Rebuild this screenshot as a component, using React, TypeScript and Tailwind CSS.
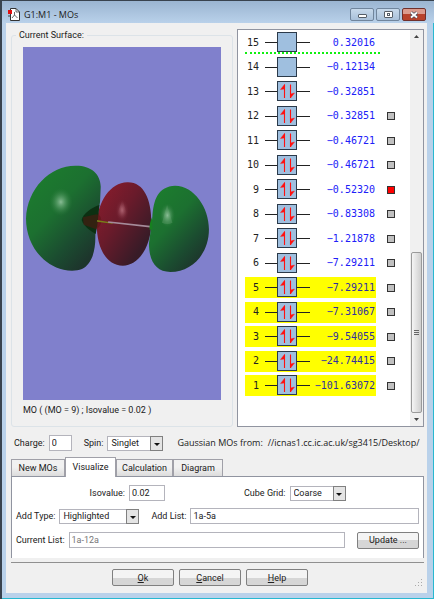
import React from "react";

type Orbital = { n: number; e: string; filled: boolean; box?: "grey" | "red"; hl?: boolean };

const orbitals: Orbital[] = [
  { n: 15, e: "0.32016", filled: false },
  { n: 14, e: "−0.12134", filled: false },
  { n: 13, e: "−0.32851", filled: true },
  { n: 12, e: "−0.32851", filled: true, box: "grey" },
  { n: 11, e: "−0.46721", filled: true, box: "grey" },
  { n: 10, e: "−0.46721", filled: true, box: "grey" },
  { n: 9, e: "−0.52320", filled: true, box: "red" },
  { n: 8, e: "−0.83308", filled: true, box: "grey" },
  { n: 7, e: "−1.21878", filled: true, box: "grey" },
  { n: 6, e: "−7.29211", filled: true, box: "grey" },
  { n: 5, e: "−7.29211", filled: true, box: "grey", hl: true },
  { n: 4, e: "−7.31067", filled: true, box: "grey", hl: true },
  { n: 3, e: "−9.54055", filled: true, box: "grey", hl: true },
  { n: 2, e: "−24.74415", filled: true, box: "grey", hl: true },
  { n: 1, e: "−101.63072", filled: true, box: "grey", hl: true },
];

function OrbitalRow({ o }: { o: Orbital }) {
  return (
    <li className="flex h-[21px] items-center">
      <div className={`flex h-full w-[131px] items-center ${o.hl ? "bg-[#ffff00]" : ""}`}>
        <span className="w-[14px] text-right text-[#222]">{o.n}</span>
        <svg className="ml-[6px] h-[21px] w-[45px] shrink-0" viewBox="0 0 45 21" aria-hidden="true">
          <path d="M0 10.5H45" stroke="#222" strokeWidth="1" />
          <rect x="12.5" y="0.5" width="19" height="19" fill="#9fbfdf" stroke="#2b3a4a" />
          {o.filled && (
            <g fill="#ff1010" stroke="#ff1010">
              <path d="M19.5 3.5V17" strokeWidth="1.1" />
              <path d="M19.5 3.5L15.5 8.5L19.5 8Z" strokeWidth="0.4" />
              <path d="M25.5 3.5V17" strokeWidth="1.1" />
              <path d="M25.5 17L29.5 12L25.5 13Z" strokeWidth="0.4" />
            </g>
          )}
        </svg>
        <span className={`flex w-[65px] justify-end ${o.hl ? "text-[#3030a0]" : "text-[#2020f8]"}`}>{o.e}</span>
      </div>
      {o.box && (
        <input
          type="checkbox"
          aria-label={`Surface for orbital ${o.n}`}
          defaultChecked={o.box === "red"}
          className="ml-[11px] size-2 appearance-none border border-[#333] bg-[#c0c0c0] checked:bg-[#ff0000]"
        />
      )}
    </li>
  );
}

function Surface() {
  return (
    <svg className="block h-[353px] w-full bg-[#8080cc]" viewBox="0 0 197 353" preserveAspectRatio="none" role="img" aria-label="Molecular orbital surface">
      <defs>
        <linearGradient id="green" x1="0.1" y1="0.1" x2="0.75" y2="0.95">
          <stop offset="0" stopColor="#1c7c2e" />
          <stop offset="0.4" stopColor="#1c7030" />
          <stop offset="0.75" stopColor="#1b4c30" />
          <stop offset="1" stopColor="#1d352c" />
        </linearGradient>
        <linearGradient id="red" x1="0.1" y1="0.1" x2="0.8" y2="0.8">
          <stop offset="0" stopColor="#861c2c" />
          <stop offset="0.45" stopColor="#6a1b2b" />
          <stop offset="1" stopColor="#381b27" />
        </linearGradient>
        <radialGradient id="shine">
          <stop offset="0" stopColor="#8fc09a" stopOpacity="0.95" />
          <stop offset="0.4" stopColor="#66a674" stopOpacity="0.6" />
          <stop offset="1" stopColor="#2c7a3c" stopOpacity="0" />
        </radialGradient>
        <radialGradient id="redShine">
          <stop offset="0" stopColor="#b56a78" stopOpacity="0.7" />
          <stop offset="1" stopColor="#7a2838" stopOpacity="0" />
        </radialGradient>
      </defs>
      <g transform="translate(-8 103) scale(0.33333)">
        <path d="M180 47C225 46 255 70 256 110L254 155C248 195 240 220 240 262C240 310 226 345 200 357C185 363 165 364 145 359C80 345 33 280 33 206C36 115 105 47 180 47Z" fill="url(#green)" />
        <ellipse cx="137" cy="156" rx="35" ry="42" fill="url(#shine)" />
        <path d="M335 97C385 95 407 150 407 215C407 285 372 347 322 347C270 346 244 290 244 222C247 155 285 98 335 97Z" fill="url(#red)" />
        <path d="M321 148L337 202Q320 211 302 201Z" fill="url(#redShine)" />
        <ellipse cx="320" cy="182" rx="20" ry="34" fill="url(#redShine)" />
        <path d="M478 107C535 108 579 172 579 238C579 310 530 366 464 366C420 365 400 333 400 280L410 205C413 145 428 110 478 107Z" fill="url(#green)" />
        <path d="M454 165L470 218Q455 226 439 218Z" fill="#68a574" opacity="0.4" />
        <ellipse cx="455" cy="196" rx="23" ry="36" fill="url(#shine)" />
        <path d="M252 165C230 172 203 190 199 210C206 230 226 243 241 252L246 225Z" fill="#0c3012" />
        <path d="M203 202L243 193Q257 193 258 214Q255 232 242 238L205 224Z" fill="#5a1410" opacity="0.5" />
        <path d="M245 210L292 218L291 221L245 215Z" fill="#788018" />
        <path d="M278 216L403 230" stroke="#a58b9a" strokeWidth="5" />
        <path d="M410 200Q400 220 402 240L410 238Z" fill="#178020" />
      </g>
    </svg>
  );
}

function Field({ id, label, value, className, disabled }: { id: string; label: string; value: string; className: string; disabled?: boolean }) {
  return (
    <>
      <label htmlFor={id} className="shrink-0 whitespace-nowrap">{label}</label>
      <input
        id={id}
        defaultValue={value}
        disabled={disabled}
        className={`ml-1 h-4 min-w-0 border border-[#b4b4bc] bg-white px-[2px] disabled:text-[#777] ${className}`}
      />
    </>
  );
}

function Picker({ id, label, value, className }: { id: string; label: string; value: string; className: string }) {
  return (
    <>
      <label htmlFor={id} className="shrink-0 whitespace-nowrap">{label}</label>
      <div className={`relative ml-1 h-[15px] shrink-0 ${className}`}>
        <select id={id} defaultValue={value} className="block h-full w-full appearance-none border border-[#b4b4bc] bg-white pl-[3px] leading-[11px]">
          <option>{value}</option>
        </select>
        <span className="pointer-events-none absolute inset-y-0 right-0 flex w-[13px] items-center justify-center border border-[#808080] bg-[#e4e4e4]">
          <svg className="mt-[2px] h-[3px] w-[6px]" viewBox="0 0 6 3" aria-hidden="true"><path d="M0 0H6L3 3Z" fill="#111" /></svg>
        </span>
      </div>
    </>
  );
}

const buttonClass = "h-[17px] w-[62px] rounded-[2px] border border-[#808080] bg-linear-to-b from-[#f4f4f4] from-50% to-[#d6d6d6] to-50% leading-[14px]";
const tabClass = "h-[17px] border border-b-0 border-[#a0a0a8] bg-linear-to-b from-[#f1f1f1] from-45% to-[#dcdcdc] text-center";

export default function App() {
  return (
    <main className="flex min-h-screen flex-col border-t border-l-2 border-[#39434e] bg-[#b9d1ea] pr-[7px] pb-[6px] pl-1 font-['Roboto','Liberation_Sans',sans-serif] text-[9px] leading-[12px] text-[#202020] shadow-[inset_-1px_-1px_0_#28b8d0]">
      <header className="-mr-[7px] -ml-1 flex h-[22px] items-start bg-linear-to-b from-[#9bb5d1] to-[#b9d1ea] pr-2 pl-[5px]">
        <svg className="mt-[7px] size-[13px]" viewBox="0 0 13 13" aria-hidden="true">
          <path d="M3.5.5H9L12.5 4V12.5H3.5Z" fill="#fff" stroke="#333" />
          <path d="M9 .5V4H12.5M7.5 4V7L5 10M7.5 7L10.5 10" fill="none" stroke="#444" strokeWidth="0.8" />
          <rect x="1" y="2" width="4" height="4" fill="#e01010" />
          <path d="M1 8H3" stroke="#444" />
        </svg>
        <h1 className="mt-[7px] ml-1 flex-1 font-['Open_Sans',sans-serif] leading-[14px]">G1:M1 - MOs</h1>
        <div className="mt-[7px] flex gap-[2px]">
          <button aria-label="Minimize" className="flex h-[13px] w-6 items-center justify-center rounded-[2px] border border-[#70859c] bg-linear-to-b from-[#c7d9eb] to-[#a9c1da]">
            <span className="mt-[3px] h-1 w-[9px] rounded-[1px] border border-[#555e68] bg-white" />
          </button>
          <button aria-label="Maximize" className="flex h-[13px] w-6 items-center justify-center rounded-[2px] border border-[#70859c] bg-linear-to-b from-[#c7d9eb] to-[#a9c1da]">
            <span className="flex h-[7px] w-[9px] items-center justify-center rounded-[1px] border border-[#555e68] bg-white"><span className="h-[3px] w-[3px] border border-[#555e68]" /></span>
          </button>
          <button aria-label="Close" className="flex h-[13px] w-6 items-center justify-center rounded-[2px] border border-[#70302c] bg-linear-to-b from-[#dc9b8e] from-45% to-[#b8422c] to-50%">
            <svg className="h-[8px] w-[10px]" viewBox="0 0 10 8" aria-hidden="true">
              <path d="M2 1.5L8 6.5M8 1.5L2 6.5" stroke="#444b5a" strokeWidth="3.2" />
              <path d="M2 1.5L8 6.5M8 1.5L2 6.5" stroke="#fff" strokeWidth="1.8" />
            </svg>
          </button>
        </div>
      </header>

      <div className="flex flex-1 flex-col bg-[#f0f0f0] pt-[6px] pr-[3px] pl-[5px]">
        <div className="flex gap-1">
          <fieldset className="min-w-0 flex-1 rounded-[3px] border border-[#dce3e8] px-[11px] pb-[10px]">
            <legend className="-ml-[7px] px-[3px]">Current Surface:</legend>
            <div className="pt-[6px]">
              <Surface />
              <p className="mt-[4px]">MO ( (MO = 9) ; Isovalue = 0.02 )</p>
            </div>
          </fieldset>

          <section aria-label="Orbitals" className="flex w-[187px] shrink-0 border border-[#9094a0] bg-white">
            <ul className="relative mt-[2px] ml-[7px] flex h-[364px] flex-1 flex-col justify-between font-['DejaVu_Sans_Mono','Liberation_Mono',monospace] text-[10px]">
              {orbitals.map((o) => <OrbitalRow key={o.n} o={o} />)}
              <li aria-hidden="true" className="absolute top-[20px] left-0 w-[135px] border-t-2 border-dotted border-[#10f010]" />
            </ul>
            <div className="flex w-[13px] flex-col items-center bg-[#f0f0f0]" aria-hidden="true">
              <svg className="mt-[5px] h-[3px] w-[5px]" viewBox="0 0 5 3"><path d="M0 3H5L2.5 0Z" fill="#444" /></svg>
              <div className="mt-auto flex h-[161px] w-[11px] flex-col items-center justify-center gap-px rounded-[2px] border border-[#9a9a9a] bg-linear-to-r from-[#f5f5f5] to-[#cfcfcf]">
                <span className="h-px w-[5px] bg-[#666]" />
                <span className="h-px w-[5px] bg-[#666]" />
                <span className="h-px w-[5px] bg-[#666]" />
              </div>
              <svg className="my-[5px] h-[3px] w-[5px]" viewBox="0 0 5 3"><path d="M0 0H5L2.5 3Z" fill="#444" /></svg>
            </div>
          </section>
        </div>

        <div className="mt-2 flex h-4 items-center pl-[3px]">
          <Field id="charge" label="Charge:" value="0" className="w-[23px]" />
          <div className="ml-3 flex items-center"><Picker id="spin" label="Spin:" value="Singlet" className="w-14" /></div>
          <p className="ml-[14px] min-w-0 flex-1 overflow-hidden font-['Open_Sans',sans-serif] whitespace-nowrap">
            <span>Gaussian MOs from:</span><span className="ml-[5px]">//icnas1.cc.ic.ac.uk/sg3415/Desktop/</span>
          </p>
        </div>

        <div role="tablist" className="mt-[6px] flex h-[19px] items-end">
          <button role="tab" aria-selected="false" className={`w-[54px] ${tabClass}`}>New MOs</button>
          <button role="tab" aria-selected="true" className="relative -mb-px h-5 w-[51px] border border-b-0 border-[#a0a0a8] bg-white pb-[2px]">Visualize</button>
          <button role="tab" aria-selected="false" className={`w-[57px] ${tabClass}`}>Calculation</button>
          <button role="tab" aria-selected="false" className={`w-[50px] ${tabClass}`}>Diagram</button>
        </div>
        <div role="tabpanel" className="flex flex-col gap-[7px] border-x border-t border-[#9094a0] bg-white px-1 pt-[8px] pb-[9px]">
          <div className="flex h-4 items-center">
            <div className="flex w-[149px] items-center justify-end"><Field id="isovalue" label="Isovalue:" value="0.02" className="w-9" /></div>
            <div className="ml-[79px] flex items-center"><Picker id="grid" label="Cube Grid:" value="Coarse" className="w-14" /></div>
          </div>
          <div className="flex h-4 items-center">
            <Picker id="type" label="Add Type:" value="Highlighted" className="w-20" />
            <div className="ml-3 flex flex-1 items-center"><Field id="list" label="Add List:" value="1a-5a" className="flex-1" /></div>
          </div>
          <div className="flex h-[18px] items-center">
            <Field id="current" label="Current List:" value="1a-12a" className="flex-1" disabled />
            <button className={`ml-3 ${buttonClass}`}>Update ...</button>
          </div>
        </div>

        <hr className="mt-1 border-[#909090]" />
        <footer className="relative mt-[6px] flex justify-center gap-[5px] pr-[15px]">
          <button className={buttonClass}><u>O</u>k</button>
          <button className={buttonClass}><u>C</u>ancel</button>
          <button className={buttonClass}><u>H</u>elp</button>
          <svg className="absolute right-[2px] bottom-0 size-[7px]" viewBox="0 0 7 7" aria-hidden="true">
            <path d="M6 0h1v1h-1zM3 3h1v1h-1zM6 3h1v1h-1zM0 6h1v1h-1zM3 6h1v1h-1zM6 6h1v1h-1z" fill="#aaa" />
          </svg>
        </footer>
      </div>
    </main>
  );
}
